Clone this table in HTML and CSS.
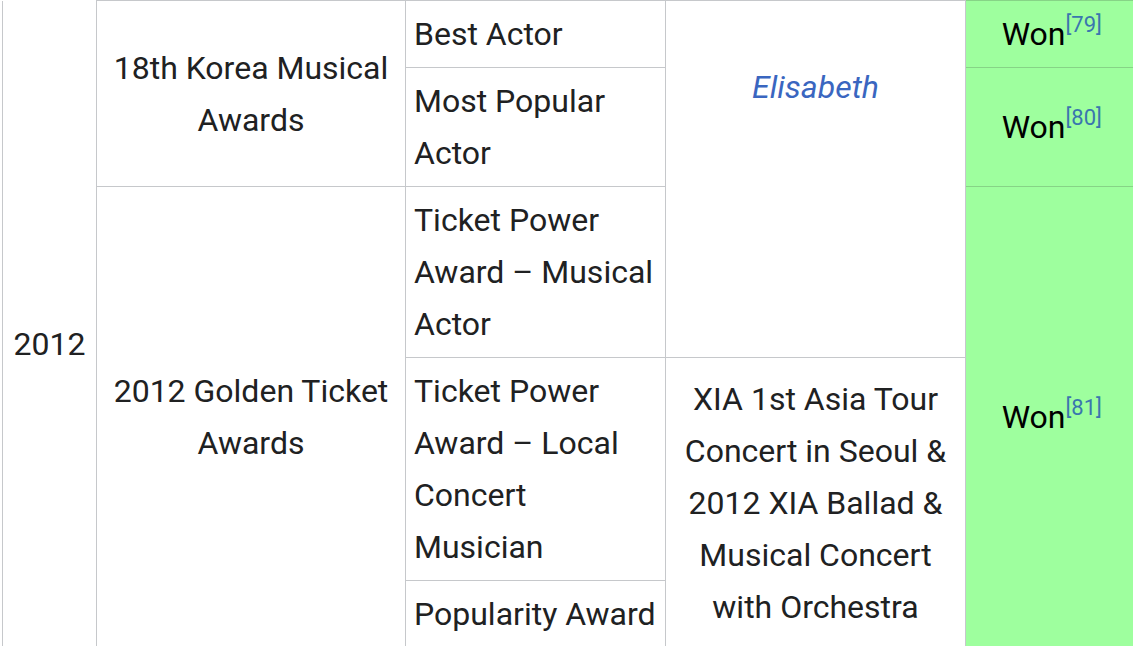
FILE: index.html
```html
<!DOCTYPE html>
<html>
<head>
<meta charset="utf-8">
<link rel="stylesheet" href="styles.css">
</head>
<body>
<table class="awards">
  <colgroup>
    <col class="c-year">
    <col class="c-event">
    <col class="c-cat">
    <col class="c-work">
    <col class="c-res">
  </colgroup>
  <tr>
    <td class="year" rowspan="5">2012</td>
    <td class="ctr" rowspan="2">18th Korea Musical Awards</td>
    <td class="cat">Best Actor</td>
    <td class="ctr work" rowspan="2"><a class="link">Elisabeth</a></td>
    <td class="won">Won<sup class="ref">[79]</sup></td>
  </tr>
  <tr>
    <td class="cat">Most Popular Actor</td>
    <td class="won">Won<sup class="ref">[80]</sup></td>
  </tr>
  <tr>
    <td class="ctr" rowspan="3">2012 Golden Ticket Awards</td>
    <td class="cat">Ticket Power Award – Musical Actor</td>
    <td class="empty"></td>
    <td class="won" rowspan="3">Won<sup class="ref">[81]</sup></td>
  </tr>
  <tr>
    <td class="cat">Ticket Power Award – Local Concert Musician</td>
    <td class="ctr" rowspan="2">XIA 1st Asia Tour Concert in Seoul &amp; 2012 XIA Ballad &amp; Musical Concert with Orchestra</td>
  </tr>
  <tr>
    <td class="cat">Popularity Award</td>
  </tr>
</table>
</body>
</html>
```

FILE: styles.css
```css
html, body {
  margin: 0;
  padding: 0;
  background: #ffffff;
  overflow: hidden;
}

.awards {
  margin-left: 2px;
  border-collapse: collapse;
  border-bottom: 1px hidden;
  table-layout: fixed;
  width: 1135px;
  font-family: Roboto, "Noto Sans", sans-serif;
  font-size: 32px;
  line-height: 52px;
  color: #202122;
}

.c-year { width: 94px; }
.c-event { width: 309px; }
.c-cat { width: 260px; }
.c-work { width: 300px; }
.c-res { width: 172px; }

.awards td {
  border: 1px solid #c6c8cb;
  padding: 7px 8px;
  vertical-align: middle;
}

.awards td.year {
  border-top-style: hidden;
  text-align: center;
  padding-top: 47px;
}

.ctr {
  text-align: center;
}

.cat {
  text-align: left;
}

.awards td.work {
  border-bottom-style: hidden;
  padding-bottom: 21px;
}

.awards td.empty {
  border-top-style: hidden;
}

.awards td.won {
  background: #9eff9e;
  text-align: center;
  color: #000000;
  border-top-color: #86d486;
  border-bottom-color: #86d486;
  border-right-style: hidden;
}

.link {
  color: #3a66c0;
  font-style: italic;
}

.ref {
  font-size: 22px;
  line-height: 1;
  color: #3a76ae;
  vertical-align: 13px;
}
```
